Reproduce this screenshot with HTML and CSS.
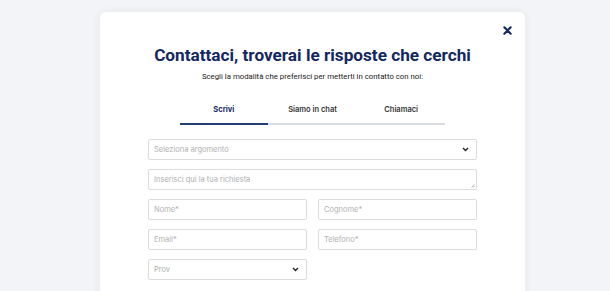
FILE: index.html
```html
<!DOCTYPE html>
<html lang="it">
<head>
  <meta charset="UTF-8">
  <title>Contattaci</title>
  <link rel="stylesheet" href="styles.css">
</head>
<body>
  <div class="contact-modal">
    <button class="modal-close" type="button" aria-label="Chiudi">
      <svg width="9" height="9" viewBox="0 0 10 10"><path d="M1.5 1.5 L8.5 8.5 M8.5 1.5 L1.5 8.5" stroke="#13285f" stroke-width="2.4" stroke-linecap="round"/></svg>
    </button>
    <h1 class="modal-title">Contattaci, troverai le risposte che cerchi</h1>
    <p class="modal-subtitle">Scegli la modalità che preferisci per metterti in contatto con noi:</p>

    <div class="contact-tabs">
      <div class="contact-tab active">Scrivi</div>
      <div class="contact-tab">Siamo in chat</div>
      <div class="contact-tab">Chiamaci</div>
    </div>

    <form class="contact-form">
      <div class="field select-field">
        <span class="placeholder">Seleziona argomento</span>
        <svg class="chevron" width="7" height="5" viewBox="0 0 7 5"><path d="M1 1 L3.5 3.5 L6 1" fill="none" stroke="#222" stroke-width="1.4"/></svg>
      </div>
      <div class="field textarea-field">
        <span class="placeholder">Inserisci qui la tua richiesta</span>
        <svg class="grip" width="4" height="4" viewBox="0 0 4 4"><path d="M0.5 3.5 L3.5 0.5 M2 3.5 L3.5 2" stroke="#999" stroke-width="0.7"/></svg>
      </div>
      <div class="form-row">
        <div class="field"><span class="placeholder">Nome*</span></div>
        <div class="field"><span class="placeholder">Cognome*</span></div>
      </div>
      <div class="form-row">
        <div class="field"><span class="placeholder">Email*</span></div>
        <div class="field"><span class="placeholder">Telefono*</span></div>
      </div>
      <div class="form-row">
        <div class="field select-field">
          <span class="placeholder">Prov</span>
          <svg class="chevron" width="7" height="5" viewBox="0 0 7 5"><path d="M1 1 L3.5 3.5 L6 1" fill="none" stroke="#222" stroke-width="1.4"/></svg>
        </div>
        <div></div>
      </div>
    </form>
  </div>
</body>
</html>
```

FILE: styles.css
```css
html {
  font-family: 'Inter', 'Noto Sans', sans-serif;
  background: #f3f4f7;
}
html, body {
  margin: 0;
  height: 100%;
  overflow: hidden;
}
*,
*::before,
*::after {
  box-sizing: border-box;
}
body {
  padding-top: 12px;
}
.contact-modal {
  position: relative;
  width: 425px;
  height: 320px;
  margin-left: 100px;
  padding: 32px 48px 0;
  background: #fff;
  border-radius: 6px;
  box-shadow: 0 0 8px rgba(20, 30, 60, .06);
}
.modal-close {
  position: absolute;
  top: 13px;
  right: 12px;
  width: 11px;
  height: 11px;
  padding: 0;
  border: 0;
  background: none;
  display: flex;
  align-items: center;
  justify-content: center;
}
.modal-title {
  margin: 0;
  font-family: 'Roboto', 'Inter', sans-serif;
  font-size: 17.2px;
  font-weight: 700;
  line-height: 22px;
  color: #13285f;
  text-align: center;
  white-space: nowrap;
}
.modal-subtitle {
  margin: 5px 0 0;
  font-family: 'Roboto', 'Inter', sans-serif;
  font-size: 7.8px;
  line-height: 12px;
  color: #222;
  text-align: center;
}
.contact-tabs {
  display: grid;
  grid-template-columns: repeat(3, 1fr);
  width: 266px;
  margin: 22px auto 0;
}
.contact-tab {
  padding-bottom: 8px;
  font-size: 7.5px;
  font-weight: 600;
  line-height: 10px;
  color: #333;
  text-align: center;
  border-bottom: 2px solid #d9dde3;
}
.contact-tab.active {
  font-weight: 700;
  color: #13285f;
  border-bottom-color: #243e76;
}
.contact-form {
  display: flex;
  flex-direction: column;
  gap: 9px;
  margin-top: 14px;
}
.form-row {
  display: grid;
  grid-template-columns: 1fr 1fr;
  gap: 11px;
}
.field {
  position: relative;
  display: flex;
  align-items: center;
  height: 21px;
  padding: 0 5px;
  border: 1px solid #dcdcdc;
  border-radius: 2px;
  background: #fff;
}
.placeholder {
  font-size: 7.5px;
  color: #b0b0b0;
}
.select-field {
  justify-content: space-between;
  padding-right: 7px;
}
.textarea-field .grip {
  position: absolute;
  right: 1px;
  bottom: 1px;
}
```
